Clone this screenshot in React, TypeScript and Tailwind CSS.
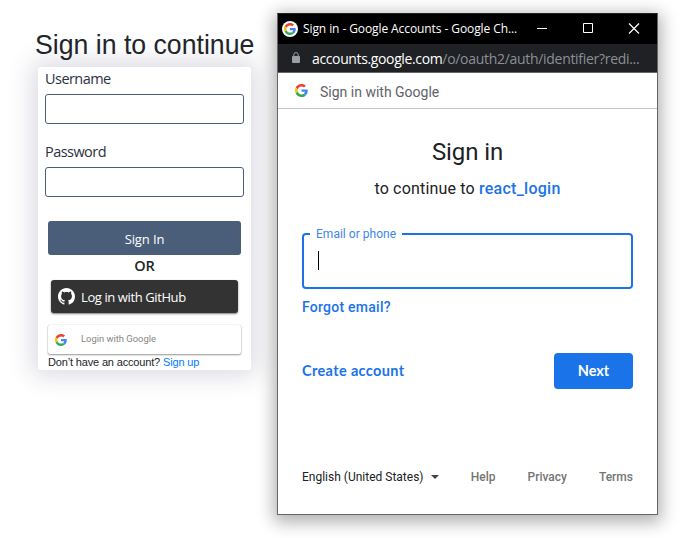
import React from "react";

function GoogleG({ className }: { className: string }) {
  return (
    <svg viewBox="0 0 48 48" className={className}>
      <path fill="#EA4335" d="M24 9.5c3.54 0 6.71 1.22 9.21 3.6l6.85-6.85C35.9 2.38 30.47 0 24 0 14.62 0 6.51 5.38 2.56 13.22l7.98 6.19C12.43 13.72 17.74 9.5 24 9.5z" />
      <path fill="#4285F4" d="M46.98 24.55c0-1.57-.15-3.09-.38-4.55H24v9.02h12.94c-.58 2.96-2.26 5.48-4.78 7.18l7.73 6c4.51-4.18 7.09-10.36 7.09-17.65z" />
      <path fill="#FBBC05" d="M10.53 28.59c-.48-1.45-.76-2.99-.76-4.59s.27-3.14.76-4.59l-7.98-6.19C.92 16.46 0 20.12 0 24c0 3.88.92 7.54 2.56 10.78l7.97-6.19z" />
      <path fill="#34A853" d="M24 48c6.48 0 11.93-2.13 15.89-5.81l-7.73-6c-2.15 1.45-4.92 2.3-8.16 2.3-6.26 0-11.57-4.22-13.47-9.91l-7.98 6.19C6.51 42.62 14.62 48 24 48z" />
    </svg>
  );
}

function GitHubMark() {
  return (
    <svg viewBox="0 0 16 16" className="h-[17px] w-[17px] shrink-0" fill="#fff">
      <path d="M8 0C3.58 0 0 3.58 0 8c0 3.54 2.29 6.53 5.47 7.59.4.07.55-.17.55-.38 0-.19-.01-.82-.01-1.49-2.01.37-2.53-.49-2.69-.94-.09-.23-.48-.94-.82-1.13-.28-.15-.68-.52-.01-.53.63-.01 1.08.58 1.23.82.72 1.21 1.87.87 2.33.66.07-.52.28-.87.51-1.07-1.78-.2-3.64-.89-3.64-3.95 0-.87.31-1.59.82-2.15-.08-.2-.36-1.02.08-2.12 0 0 .67-.21 2.2.82.64-.18 1.32-.27 2-.27s1.36.09 2 .27c1.53-1.04 2.2-.82 2.2-.82.44 1.1.16 1.92.08 2.12.51.56.82 1.27.82 2.15 0 3.07-1.87 3.75-3.65 3.95.29.25.54.73.54 1.48 0 1.07-.01 1.93-.01 2.2 0 .21.15.46.55.38A8.01 8.01 0 0 0 16 8c0-4.42-3.58-8-8-8z" />
    </svg>
  );
}

function LoginForm() {
  return (
    <section className="ml-[35px] w-[242px] shrink-0 pt-[27px]">
      <h1 className="h-[40px] w-[242px] origin-left scale-x-[0.952] text-[28px] leading-[36px] whitespace-nowrap text-[#212529]">Sign in to continue</h1>
      <div className="ml-[3px] flex h-[303px] w-[213px] flex-col rounded-[3px] bg-white px-[7px] font-['Open_Sans',sans-serif] text-[#212529] shadow-[0_0_24px_6px_rgba(40,30,80,0.16)]">
        <label className="h-[27px] text-[14.5px] leading-[24px] tracking-[-0.55px] text-[#2b3142]">Username</label>
        <input className="h-[30px] w-[199px] shrink-0 rounded-[3px] border border-[#4a5d78] outline-none" />
        <label className="mt-[16px] h-[27px] text-[14.5px] leading-[24px] tracking-[-0.55px] text-[#2b3142]">Password</label>
        <input className="h-[30px] w-[199px] shrink-0 rounded-[3px] border border-[#4a5d78] outline-none" />
        <button className="mt-[24px] ml-[3px] h-[34px] w-[193px] shrink-0 rounded-[3px] bg-[#4b5e79] pt-[2px] text-[13px] leading-[30px] tracking-[-0.1px] text-white">Sign In</button>
        <div className="h-[25px] w-[199px] text-center text-[14.5px] leading-[21px] font-semibold tracking-[-0.1px]">OR</div>
        <button className="ml-[6px] flex h-[33px] w-[187px] shrink-0 items-center gap-[6px] rounded-[3px] bg-[#333] pl-[7px] text-[13px] tracking-[-0.4px] text-white shadow-[0_1px_2px_rgba(0,0,0,0.5)]">
          <GitHubMark />
          <span className="pt-[2px] whitespace-nowrap">Log in with GitHub</span>
        </button>
        <button className="mt-[12px] ml-[3px] flex h-[29px] w-[193px] shrink-0 items-center rounded-[2px] bg-white pl-[7px] font-[Roboto,sans-serif] text-[9.4px] text-[#858585] shadow-[0_1px_2px_rgba(0,0,0,0.4),0_0_1px_rgba(0,0,0,0.24)]">
          <GoogleG className="h-3 w-3" />
          <span className="ml-[14px] whitespace-nowrap">Login with Google</span>
        </button>
        <p className="ml-[3px] h-[16px] font-['Liberation_Sans',Arial,sans-serif] text-[11px] leading-[16px] tracking-[-0.16px] whitespace-nowrap">
          Don’t have an account? <a className="text-[#007bff]">Sign up</a>
        </p>
      </div>
    </section>
  );
}

function BrowserWindow() {
  return (
    <section className="mt-[13px] flex h-[502px] w-[381px] shrink-0 flex-col border border-[#666] border-t-[#222] bg-white font-[Roboto,sans-serif] shadow-[0_4px_16px_3px_rgba(0,0,0,0.32)]">
      <header className="flex h-[30px] shrink-0 items-center bg-black pl-1 text-white">
        <span className="flex h-4 w-4 items-center justify-center rounded-full bg-white">
          <GoogleG className="h-3 w-3" />
        </span>
        <span className="ml-[5px] w-[220px] font-['Open_Sans',sans-serif] text-[12px] tracking-[-0.09px] whitespace-nowrap">Sign in - Google Accounts - Google Ch...</span>
        <svg viewBox="0 0 110 12" className="ml-[14px] h-3 w-[110px]" fill="none" stroke="#fff">
          <path d="M0 5.5H10" />
          <path d="M46.5 0.5h9v9h-9z" />
          <path d="M92 0.5l10 10M102 0.5L92 10.5" strokeWidth="1.2" />
        </svg>
      </header>
      <div className="flex h-[29px] shrink-0 items-center border-b border-[#666] bg-[#202124] pl-[14px]">
        <svg viewBox="0 0 8 11" className="mb-px h-[11px] w-2" fill="#9aa0a6">
          <rect y="4" width="8" height="7" rx="1" />
          <path d="M1.8 4.5V2.8a2.2 2.2 0 0 1 4.4 0v1.7" fill="none" stroke="#9aa0a6" />
        </svg>
        <span className="ml-[12px] font-['Open_Sans',sans-serif] text-[14px] whitespace-nowrap text-[#8b9096]">
          <span className="tracking-[-0.37px] text-white">accounts.google.com</span>
          <span className="tracking-[-0.3px]">/o/oauth2/auth/identifier?redi...</span>
        </span>
      </div>
      <div className="flex h-[36px] shrink-0 items-center border-b border-[#c6c6c6] pl-[17px]">
        <GoogleG className="h-[13px] w-[13px]" />
        <span className="ml-[12px] pt-[4px] text-[14px] text-[#5f6368]">Sign in with Google</span>
      </div>
      <main className="flex grow flex-col px-6 text-[#202124]">
        <h2 className="mt-[27px] text-center text-[24px] leading-8 tracking-[-0.1px]">Sign in</h2>
        <p className="mt-[9px] text-center text-[16px] leading-6 tracking-[0.18px]">
          to continue to <a className="font-medium tracking-[0.26px] text-[#1a73e8]">react_login</a>
        </p>
        <fieldset className="mt-[25px] h-[63px] w-[331px] rounded-[4px] border-2 border-[#1a73e8] pl-[6px]">
          <legend className="px-[6px] text-[12px] leading-4 tracking-[0.02px] text-[#4285e8]">Email or phone</legend>
          <div className="mt-[9px] ml-[8px] h-[19px] w-px bg-black" />
        </fieldset>
        <a className="mt-[8px] text-[14px] leading-5 font-medium tracking-[0.25px] text-[#1a73e8]">Forgot email?</a>
        <div className="mt-[36px] flex h-9 items-center justify-between">
          <a className="pb-px font-[Lato,sans-serif] text-[14.5px] font-bold tracking-[0.36px] text-[#1a73e8]">Create account</a>
          <button className="h-9 w-[79px] rounded-[4px] bg-[#1a73e8] pb-px font-[Lato,sans-serif] text-[14.5px] font-bold text-white">Next</button>
        </div>
        <footer className="mt-[80px] flex h-4 items-center text-[12px] whitespace-nowrap text-[#757575]">
          <span className="text-[#202124]">English (United States)</span>
          <span className="ml-[7px] h-0 w-0 border-x-4 border-t-4 border-x-transparent border-t-[#444]" />
          <a className="ml-auto font-medium">Help</a>
          <a className="ml-8 font-medium">Privacy</a>
          <a className="ml-8 font-medium">Terms</a>
        </footer>
      </main>
    </section>
  );
}

export default function App() {
  return (
    <div className="flex h-[538px] w-[683px] overflow-hidden bg-white font-['Liberation_Sans',Arial,sans-serif]">
      <LoginForm />
      <BrowserWindow />
    </div>
  );
}
